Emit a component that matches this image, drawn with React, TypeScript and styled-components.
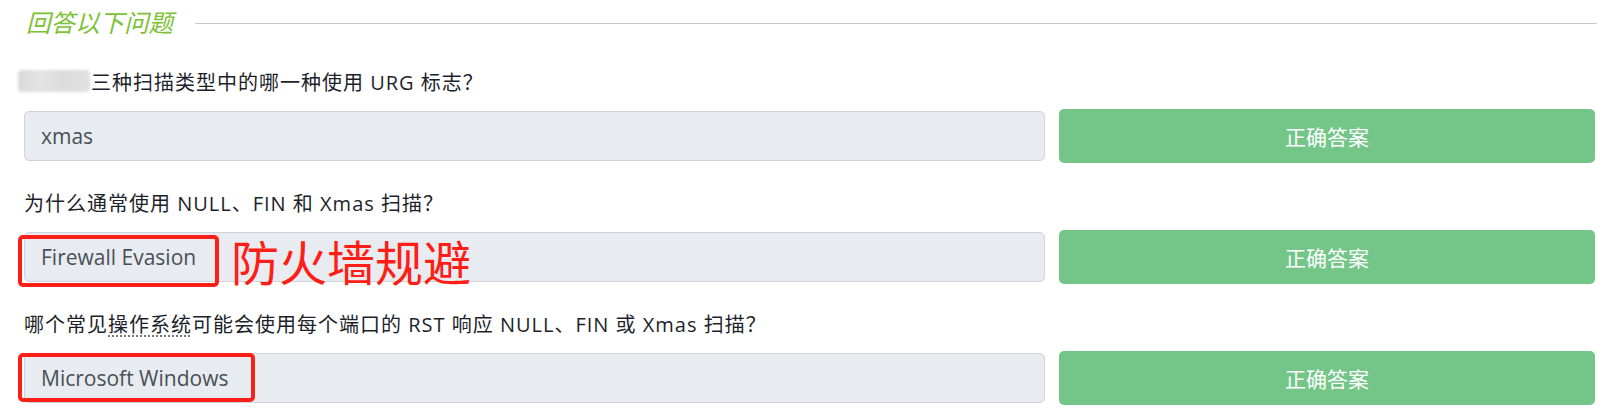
import styled, {createGlobalStyle} from 'styled-components'

const GlobalStyle = createGlobalStyle`
  html, body {
    margin: 0;
    padding: 0;
    background: #ffffff;
  }
  body {
    font-family: 'Open Sans', 'Noto Sans CJK SC', sans-serif;
  }
`

interface Question {
  id: string
  answer: string
  note?: {label: string; boxWidth: number; boxTop: number; boxHeight: number}
}

const questions: Question[] = [
  {id: 'q1', answer: 'xmas'},
  {
    id: 'q2',
    answer: 'Firewall Evasion',
    note: {label: '防火墙规避', boxWidth: 201, boxTop: 3, boxHeight: 52},
  },
  {
    id: 'q3',
    answer: 'Microsoft Windows',
    note: {label: '', boxWidth: 237, boxTop: 0, boxHeight: 49},
  },
]

function QuestionText({id}: {id: string}) {
  if (id === 'q1') {
    return (
      <Label>
        <Blur />
        三种扫描类型中的哪一种使用 URG 标志？
      </Label>
    )
  }
  if (id === 'q2') {
    return <Label>为什么通常使用 NULL、FIN 和 Xmas 扫描？</Label>
  }
  return (
    <Label>
      哪个常见<Abbr>操作系统</Abbr>可能会使用每个端口的 RST 响应 NULL、FIN 或 Xmas 扫描？
    </Label>
  )
}

function App() {
  return (
    <Page>
      <GlobalStyle />
      <Header>
        <HeaderTitle>回答以下问题</HeaderTitle>
        <HeaderRule />
      </Header>
      {questions.map(q => (
        <Block key={q.id}>
          <QuestionText id={q.id} />
          <Row>
            <Field>
              <AnswerInput readOnly value={q.answer} />
              {q.note && (
                <>
                  <RedBox
                    $width={q.note.boxWidth}
                    $top={q.note.boxTop}
                    $height={q.note.boxHeight}
                  />
                  {q.note.label && <RedNote>{q.note.label}</RedNote>}
                </>
              )}
            </Field>
            <SubmitButton>正确答案</SubmitButton>
          </Row>
        </Block>
      ))}
    </Page>
  )
}

const Page = styled.div`
  padding: 10px 26px 0 24px;
`

const Header = styled.div`
  display: flex;
  align-items: center;
  height: 24px;
  gap: 22px;
`

const HeaderTitle = styled.h3`
  margin: 0 0 0 2px;
  font-family: 'Noto Sans CJK SC', sans-serif;
  font-size: 24.5px;
  font-weight: 400;
  font-style: italic;
  color: #7cc234;
  line-height: 24px;
  white-space: nowrap;
`

const HeaderRule = styled.div`
  flex: 1;
  height: 1px;
  background: #c9c9c9;
  margin-top: 2px;
  margin-right: -2px;
`

const Block = styled.div`
  margin-top: 33px;
  display: flex;
  flex-direction: column;
  gap: 14px;

  & + & {
    margin-top: 25px;
  }
`

const Label = styled.div`
  display: flex;
  align-items: center;
  height: 28px;
  font-size: 20px;
  letter-spacing: 1px;
  color: #1d1f2b;
  white-space: nowrap;
`

const Blur = styled.span`
  display: inline-block;
  width: 72px;
  height: 22px;
  margin-left: -6px;
  margin-right: 1px;
  border-radius: 4px;
  background: linear-gradient(90deg, #d8d8d8 0%, #e4e4e4 30%, #dcdcdc 60%, #e0e0e0 100%);
  filter: blur(1.5px);
`

const Abbr = styled.span`
  text-decoration: underline dotted #777;
  text-underline-offset: 4px;
`

const Row = styled.div`
  display: flex;
  align-items: center;
  gap: 14px;
`

const Field = styled.div`
  position: relative;
  flex: 0 0 1021px;
`

const AnswerInput = styled.input`
  box-sizing: border-box;
  width: 100%;
  height: 50px;
  padding: 0 16px;
  border: 1px solid #ced4da;
  border-radius: 5px;
  background: #e8ebef;
  font-family: 'Open Sans', sans-serif;
  font-size: 21px;
  color: #495057;
  outline: none;
`

const RedBox = styled.div<{$width: number; $top: number; $height: number}>`
  position: absolute;
  left: -6px;
  top: ${p => p.$top}px;
  width: ${p => p.$width}px;
  height: ${p => p.$height}px;
  box-sizing: border-box;
  border: 4px solid #fd1f17;
  border-radius: 5px;
`

const RedNote = styled.div`
  position: absolute;
  left: 207px;
  top: 2px;
  font-family: 'Noto Sans CJK SC', sans-serif;
  font-size: 48px;
  line-height: 52px;
  color: #fd1f17;
  white-space: nowrap;
`

const SubmitButton = styled.button`
  flex: 1;
  height: 54px;
  border: none;
  border-radius: 5px;
  background: #73c687;
  color: #ffffff;
  font-family: 'Noto Sans CJK SC', sans-serif;
  font-size: 21px;
  cursor: pointer;
`

export default App
